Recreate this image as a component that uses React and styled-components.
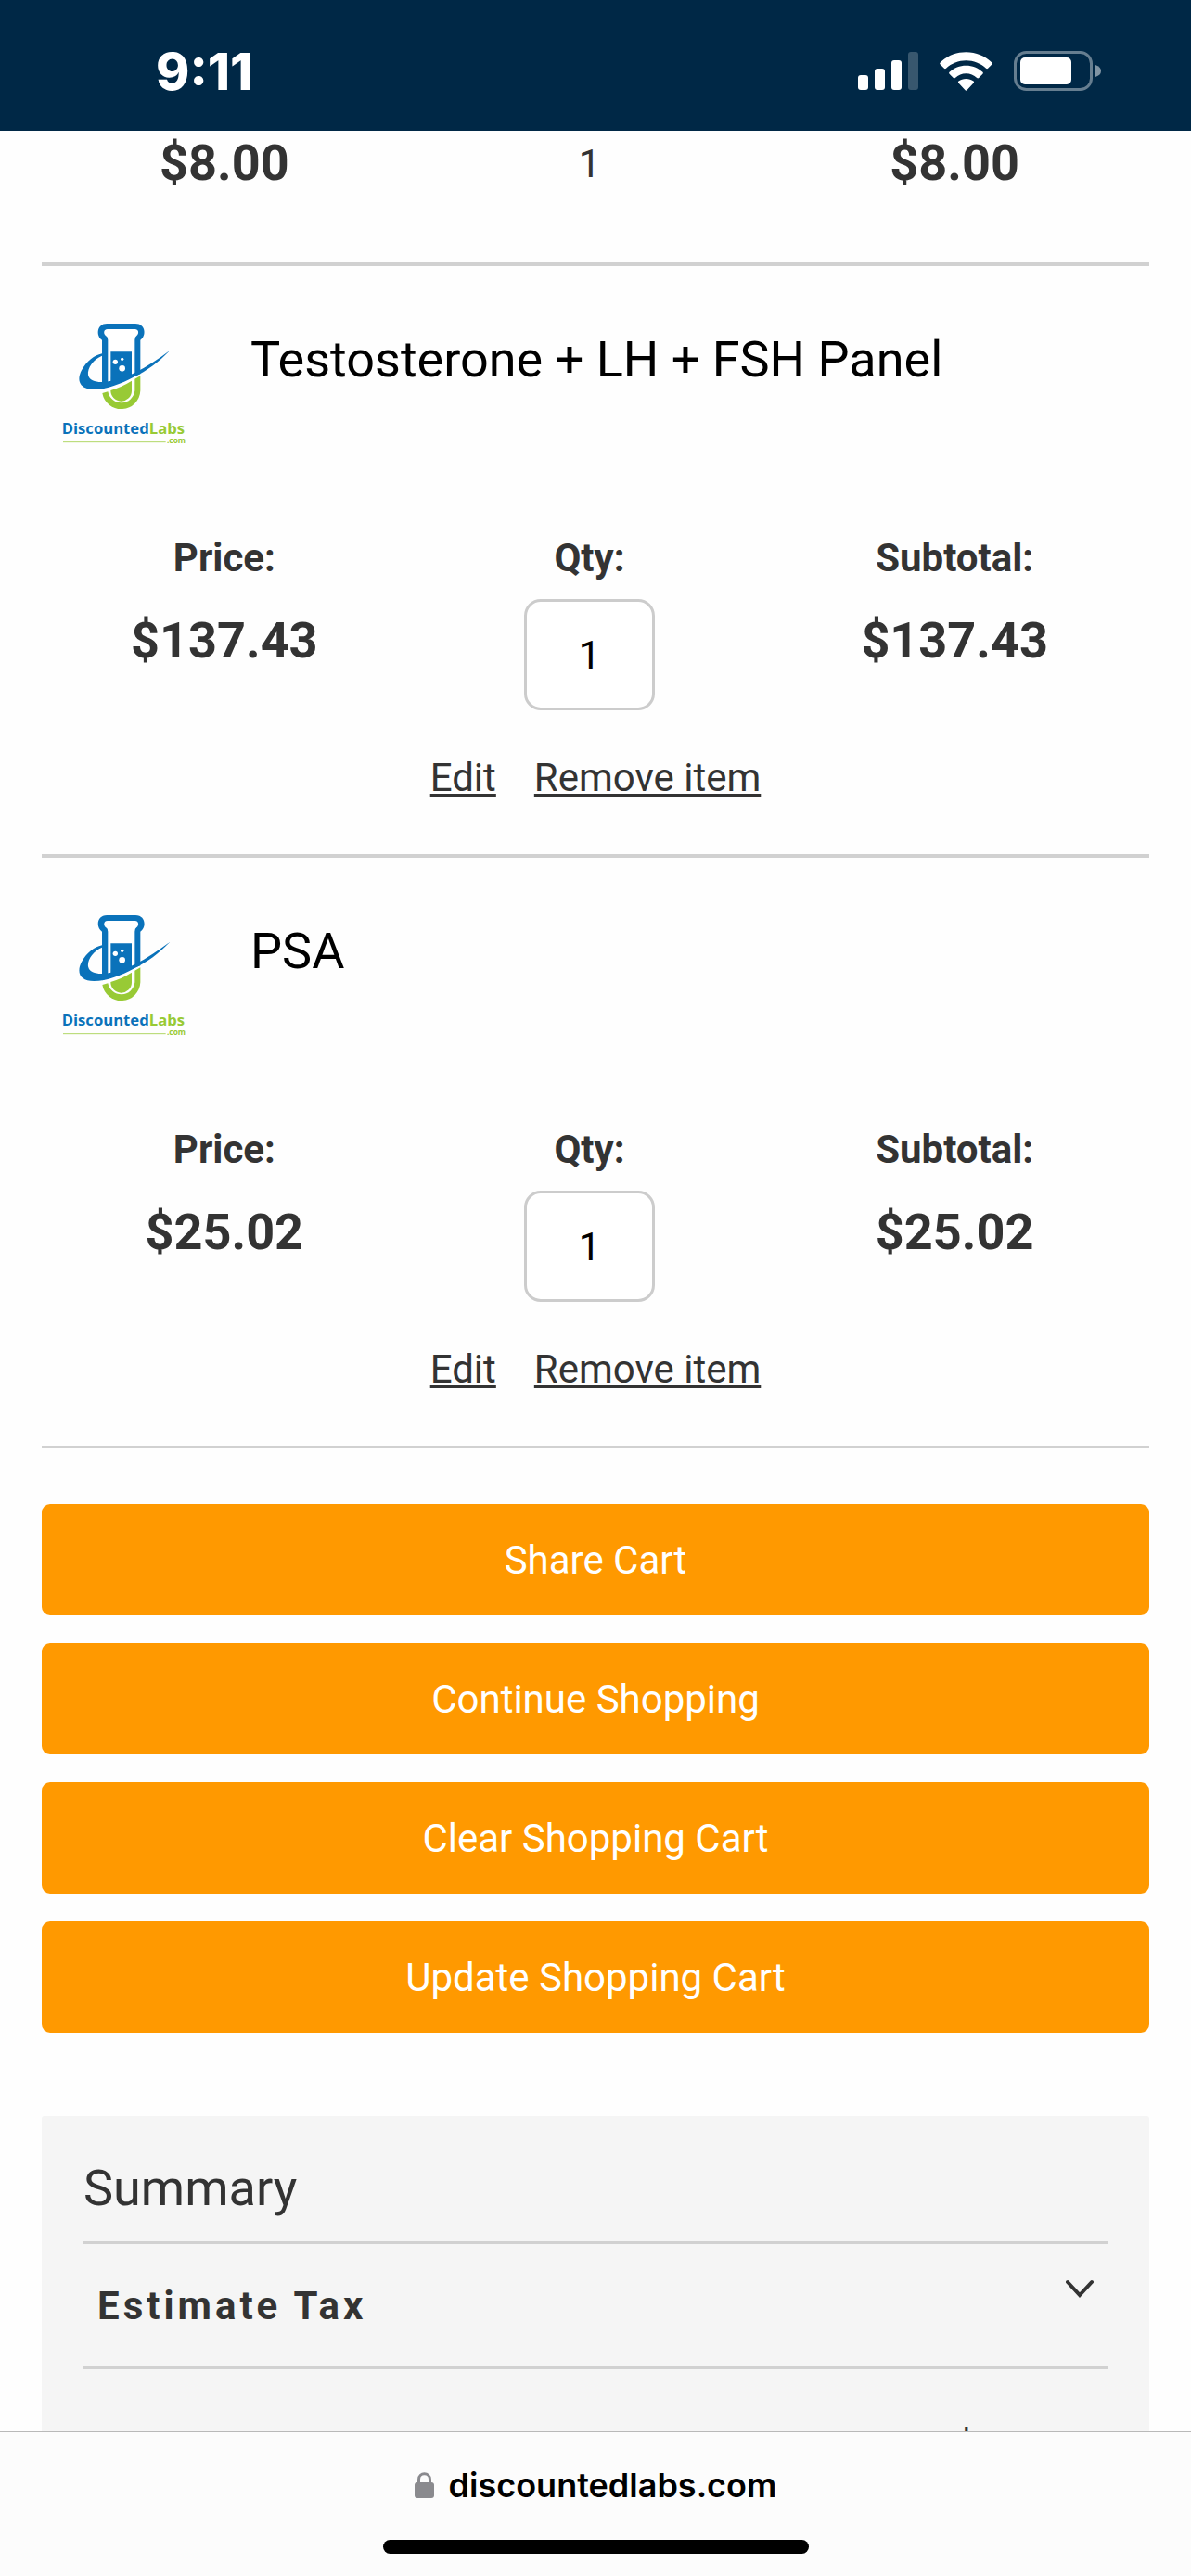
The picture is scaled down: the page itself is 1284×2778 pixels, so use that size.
import React, { useState } from "react";
import styled, { createGlobalStyle } from "styled-components";

const ink = "#333333";
const rule = "#d1d1d1";

const GlobalStyle = createGlobalStyle`
  *, *::before, *::after { box-sizing: border-box; }
  body {
    margin: 0;
    background: #fefefe;
    color: ${ink};
    font-family: Roboto, "Liberation Sans", sans-serif;
    font-size: 42px;
    line-height: 60px;
  }
`;

const Screen = styled.div`
  display: flex;
  flex-direction: column;
  height: 100vh;
`;

const StatusBar = styled.header`
  display: flex;
  flex: none;
  align-items: center;
  justify-content: space-between;
  height: 141px;
  padding: 12px 97px 0 168px;
  background: #002846;
  color: #ffffff;
`;

const Clock = styled.time`
  font-family: Inter, "Liberation Sans", sans-serif;
  font-size: 55px;
  font-weight: 800;
`;

const StatusIcons = styled.div`
  display: flex;
  align-items: center;
  gap: 23px;
`;

const Page = styled.main`
  flex: 1;
  min-height: 0;
  overflow: hidden;
  padding: 0 45px;
`;

const CartItem = styled.article`
  padding-bottom: 52px;
  border-bottom: ${(p) => (p.$last ? 3 : 4)}px solid ${rule};
`;

const CartItemTail = styled(CartItem)`
  padding-bottom: 70px;
`;

const ItemHeader = styled.div`
  display: flex;
  gap: 45px;
  padding: 33px 0 72px;
`;

const ItemName = styled.h2`
  margin: 33px 0 0;
  color: #000000;
  font-size: 54px;
  font-weight: 400;
  line-height: 70px;
`;

const Figures = styled.div`
  display: grid;
  grid-template-columns: repeat(3, 1fr);
  padding-right: 13px;
  text-align: center;
`;

const Figure = styled.div`
  display: flex;
  flex-direction: column;
  align-items: center;
  gap: 14px;
`;

const FigureLabel = styled.label`
  font-weight: 700;
`;

const Amount = styled.span`
  padding-top: ${(p) => (p.$flush ? 0 : 10)}px;
  font-size: 54px;
  font-weight: 700;
  line-height: 70px;
`;

const FixedQty = styled.span`
  line-height: 72px;
`;

const QtyInput = styled.input`
  width: 141px;
  height: 120px;
  padding: 0;
  border: 3px solid #cccccc;
  border-radius: 18px;
  background: #ffffff;
  color: #000000;
  font: inherit;
  text-align: center;
`;

const ItemActions = styled.div`
  display: flex;
  justify-content: center;
  gap: 41px;
  padding-top: 43px;
`;

const ActionLink = styled.a`
  color: ${ink};
  text-decoration: underline;
  text-decoration-thickness: 3px;
  text-underline-offset: 3px;
  text-decoration-skip-ink: none;
`;

const CartActions = styled.div`
  display: flex;
  flex-direction: column;
  gap: 30px;
  padding: 60px 0 90px;
`;

const CartButton = styled.button`
  height: 120px;
  padding: 2px 0 0;
  border: 0;
  border-radius: 9px;
  background: #ff9900;
  color: #ffffff;
  font: inherit;
`;

const Summary = styled.section`
  padding: 45px;
  border-radius: 3px;
  background: #f5f5f5;
`;

const SummaryTitle = styled.h2`
  margin: 0;
  padding-bottom: 24px;
  border-bottom: 3px solid ${rule};
  font-size: 54px;
  font-weight: 400;
  line-height: 66px;
`;

const TaxToggle = styled.button`
  display: flex;
  align-items: flex-start;
  justify-content: space-between;
  width: 100%;
  padding: 37px 15px 35px;
  border: 0;
  border-bottom: 3px solid ${rule};
  background: none;
  color: ${ink};
  font: inherit;
  font-weight: 700;
  letter-spacing: 4px;
  text-align: left;
`;

const Totals = styled.div`
  display: flex;
  justify-content: flex-end;
  padding: 54px 141px 0 0;
`;

const AddressBar = styled.footer`
  display: flex;
  flex: none;
  flex-direction: column;
  align-items: center;
  justify-content: space-between;
  height: 156px;
  padding: 27px 0 24px;
  border-top: 1px solid #b9b9b9;
  background: #fcfcfc;
`;

const Address = styled.a`
  display: flex;
  align-items: center;
  gap: 16px;
  color: #000000;
  font-family: Inter, "Liberation Sans", sans-serif;
  font-size: 36px;
  font-weight: 600;
  text-decoration: none;
`;

const HomeIndicator = styled.div`
  width: 459px;
  height: 15px;
  border-radius: 8px;
  background: #000000;
`;

function SignalIcon() {
  return (
    <svg width="65" height="41" viewBox="0 0 65 41" fill="#fff" aria-hidden="true">
      <rect x="0" y="25" width="11" height="16" rx="3" />
      <rect x="18" y="18" width="11" height="23" rx="3" />
      <rect x="36" y="9" width="11" height="32" rx="3" />
      <rect x="54" y="0" width="11" height="41" rx="3" opacity="0.22" />
    </svg>
  );
}

function WifiIcon() {
  return (
    <svg width="57" height="42" viewBox="338 72 173 126" fill="#fff" aria-hidden="true">
      <path d="M424.500 72C457 72 487 84 509 106Q512 109 509 112L496 125Q493 128 490 125C472 108 449 99 424.500 99S377 108 359 125Q356 128 353 125L340 112Q337 109 340 106C362 84 392 72 424.500 72Z" />
      <path d="M424.500 116C445 116 464 124 479 137Q482 140 479 143L466 156Q463 159 460 156C450 147 438 142 424.500 142S399 147 389 156Q386 159 383 156L370 143Q367 140 370 137C385 124 404 116 424.500 116Z" />
      <path d="M424.500 159C434 159 442 162 449 167Q452 170 449 173L428 196Q424.500 200 421 196L400 173Q397 170 400 167C407 162 415 159 424.500 159Z" />
    </svg>
  );
}

function BatteryIcon() {
  return (
    <svg width="94" height="43" viewBox="0 0 94 43" fill="none" aria-hidden="true">
      <rect x="1.500" y="1.500" width="82" height="40" rx="12" stroke="#fff" strokeOpacity="0.4" strokeWidth="3" />
      <rect x="7" y="7" width="55" height="29" rx="5" fill="#fff" />
      <path d="M88 15Q94 17 94 21.500T88 28Z" fill="#fff" opacity="0.5" />
    </svg>
  );
}

function LabsLogo() {
  const blue = "#0a72ba";
  const green = "#98ca35";
  return (
    <svg width="180" height="180" viewBox="15 0 540 540" role="img" aria-label="DiscountedLabs.com">
      <path fill={blue} d="M226 87H318C352 87 354 127 334 140V250L210 298V140C190 127 192 87 226 87Z" />
      <path fill="#fff" d="M228 105H316C331 105 329 122 322 126Q316 130 316 140V300H229V140Q229 130 222 126C215 122 213 105 228 105Z" />
      <path fill={blue} d="M238 178H306V260L238 284Z" />
      <circle cx="253" cy="211" r="8" fill="#fff" />
      <circle cx="275" cy="202" r="5" fill="#fff" />
      <circle cx="275" cy="232" r="10" fill="#fff" />
      <path fill={green} d="M334 256V304A62 62 0 0 1 211 312L229 307A44 44 0 0 0 316 304V266Z" />
      <path fill={green} d="M306 272V305A34 34 0 0 1 238 303Q276 291 306 272Z" />
      <path fill={blue} d="M430 173C394 211 354 240 316 258C270 283 225 300 184 300C139 300 126 272 144 238C159 210 184 190 210 184V191C182 203 162 230 165 253C170 277 202 279 232 274C262 268 290 259 316 246C356 226 394 200 430 173Z" />
      <text y="444" fontFamily="'Open Sans', 'Noto Sans', sans-serif" fontSize="50" fontWeight="700">
        <tspan x="80" fill={blue}>Discounted</tspan>
        <tspan fill={green}>Labs</tspan>
      </text>
      <path stroke={green} strokeWidth="3" opacity="0.75" d="M84 470H416" />
      <text x="480" y="473" textAnchor="end" fill={green} fontFamily="'Open Sans', 'Noto Sans', sans-serif" fontSize="25" fontWeight="700">
        .com
      </text>
    </svg>
  );
}

function ChevronIcon() {
  return (
    <svg width="30" height="22" viewBox="0 0 30 22" fill="none" aria-hidden="true">
      <path d="M2 4L15 18L28 4" stroke={ink} strokeWidth="4" strokeLinecap="round" />
    </svg>
  );
}

function LockIcon() {
  return (
    <svg width="21" height="28" viewBox="0 0 21 28" fill="none" aria-hidden="true">
      <path d="M4.500 13V8C4.500 -0.200 16.500 -0.200 16.500 8V13" stroke="#8a8a8e" strokeWidth="3" />
      <rect x="0" y="11" width="21" height="17" rx="3" fill="#8a8a8e" />
    </svg>
  );
}

function Item({ id, name, price, last }) {
  const [qty, setQty] = useState("1");
  return (
    <CartItem $last={last}>
      <ItemHeader>
        <LabsLogo />
        <ItemName>{name}</ItemName>
      </ItemHeader>
      <Figures>
        <Figure>
          <FigureLabel as="span">Price:</FigureLabel>
          <Amount>{price}</Amount>
        </Figure>
        <Figure>
          <FigureLabel htmlFor={id}>Qty:</FigureLabel>
          <QtyInput id={id} inputMode="numeric" value={qty} onChange={(e) => setQty(e.target.value)} />
        </Figure>
        <Figure>
          <FigureLabel as="span">Subtotal:</FigureLabel>
          <Amount>{price}</Amount>
        </Figure>
      </Figures>
      <ItemActions>
        <ActionLink href="#edit">Edit</ActionLink>
        <ActionLink href="#remove">Remove item</ActionLink>
      </ItemActions>
    </CartItem>
  );
}

const items = [
  { id: "qty-panel", name: "Testosterone + LH + FSH Panel", price: "$137.43" },
  { id: "qty-psa", name: "PSA", price: "$25.02" },
];

const actions = ["Share Cart", "Continue Shopping", "Clear Shopping Cart", "Update Shopping Cart"];

export default function App() {
  return (
    <Screen>
      <GlobalStyle />
      <StatusBar>
        <Clock>9:11</Clock>
        <StatusIcons>
          <SignalIcon />
          <WifiIcon />
          <BatteryIcon />
        </StatusIcons>
      </StatusBar>
      <Page>
        <CartItemTail>
          <Figures>
            <Amount $flush>$8.00</Amount>
            <FixedQty>1</FixedQty>
            <Amount $flush>$8.00</Amount>
          </Figures>
        </CartItemTail>
        {items.map((item, i) => (
          <Item key={item.id} {...item} last={i === items.length - 1} />
        ))}
        <CartActions>
          {actions.map((label) => (
            <CartButton key={label} type="button">{label}</CartButton>
          ))}
        </CartActions>
        <Summary>
          <SummaryTitle>Summary</SummaryTitle>
          <TaxToggle type="button" aria-expanded="false">
            Estimate Tax
            <ChevronIcon />
          </TaxToggle>
          <Totals>$</Totals>
        </Summary>
      </Page>
      <AddressBar>
        <Address href="#address">
          <LockIcon />
          discountedlabs.com
        </Address>
        <HomeIndicator />
      </AddressBar>
    </Screen>
  );
}
